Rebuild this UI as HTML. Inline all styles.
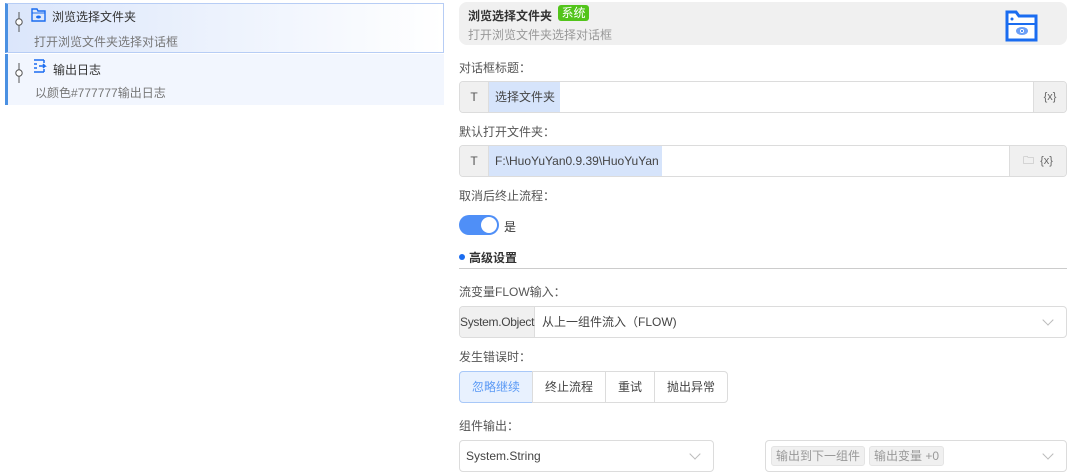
<!DOCTYPE html>
<html><head><meta charset="utf-8"><style>
*{box-sizing:border-box;margin:0;padding:0}
body{width:1070px;height:475px;background:#fff;font-family:"Liberation Sans","Noto Sans CJK SC",sans-serif;font-size:12px;color:#333;position:relative;overflow:hidden}
.a{position:absolute}
.item{position:absolute;left:5px;width:439px}
.lbl{position:absolute;left:459px;color:#555;font-size:12px}
.lbl span{font-family:"Noto Sans CJK SC",sans-serif}
.inp{position:absolute;left:459px;width:608px;height:32px;border:1px solid #dcdcdc;border-radius:4px;overflow:hidden;background:#fff}
.inp .t{position:absolute;left:0;top:0;bottom:0;width:29px;background:#f0f0f0;border-right:1px solid #ddd;text-align:center;line-height:30px;color:#555}
.inp .v{position:absolute;left:29px;top:0;bottom:0;background:#d6e4fb;line-height:30px;padding-left:6px;color:#444}
.inp .x{position:absolute;right:0;top:0;bottom:0;background:#f0f0f0;border-left:1px solid #ddd;line-height:30px;color:#666;font-size:11px;text-align:center}
.chev{position:absolute;width:8px;height:8px;border-right:1px solid #bbb;border-bottom:1px solid #bbb;transform:rotate(45deg)}
.btn{position:absolute;top:371px;height:32px;border:1px solid #dcdcdc;line-height:30px;text-align:center;color:#444;background:#fff}
.tag{display:inline-block;background:#f0f0f0;border:1px solid #e4e4e4;border-radius:3px;color:#999;padding:0 4px;height:20px;line-height:18px;margin-right:4px}
</style></head><body>
<div class="item" style="top:3px;height:50px;background:linear-gradient(90deg,#dbe6fb,#fff);border:1px solid #b7cdf5;border-left:3px solid #4a90e2"></div>
<div class="item" style="top:54px;height:51px;background:#f2f6fe;border-left:3px solid #4a90e2;left:5px"></div>
<svg class="a" style="left:14px;top:12px" width="10" height="20"><line x1="5" y1="0" x2="5" y2="20" stroke="#555"/><circle cx="5" cy="10" r="3.2" fill="#fff" stroke="#555"/></svg>
<svg class="a" style="left:14px;top:63px" width="10" height="20"><line x1="5" y1="0" x2="5" y2="20" stroke="#555"/><circle cx="5" cy="10" r="3.2" fill="#fff" stroke="#555"/></svg>
<svg class="a" style="left:31px;top:8px" width="15" height="14"><path d="M1 1h5l1 2h7v10H1z" fill="none" stroke="#1a6cf0" stroke-width="1.4"/><line x1="1" y1="5" x2="14" y2="5" stroke="#1a6cf0"/><ellipse cx="7.5" cy="9" rx="2.5" ry="1.5" fill="#1a6cf0"/></svg>
<div class="a" style="left:52px;top:8px;font-size:12px;color:#333">浏览选择文件夹</div>
<div class="a" style="left:34px;top:33px;color:#777">打开浏览文件夹选择对话框</div>
<svg class="a" style="left:32px;top:59px" width="15" height="15"><path d="M2 1h10M2 5h3M2 9h3M2 13h10M12 1v3M12 10v3M7 7h6l-2-2M13 7l-2 2" fill="none" stroke="#1a6cf0" stroke-width="1.5"/></svg>
<div class="a" style="left:53px;top:61px;color:#333">输出日志</div>
<div class="a" style="left:35px;top:84px;color:#777">以颜色#777777输出日志</div>
<div class="a" style="left:459px;top:2px;width:608px;height:43px;background:#f0f0f0;border-radius:8px"></div>
<div class="a" style="left:468px;top:7px;font-weight:bold;font-size:12px;color:#333">浏览选择文件夹</div>
<div class="a" style="left:558px;top:5px;width:31px;height:16px;background:#52c41a;border-radius:3px;color:#fff;font-size:12px;line-height:16px;text-align:center">系统</div>
<div class="a" style="left:468px;top:26px;color:#999">打开浏览文件夹选择对话框</div>
<svg class="a" style="left:1005px;top:10px" width="33" height="32"><path d="M2 2h9l3 4h17v24H2z" fill="#fff" stroke="#1a6cf0" stroke-width="3"/><line x1="2" y1="14" x2="31" y2="14" stroke="#1a6cf0" stroke-width="2"/><circle cx="7" cy="9" r="1.5" fill="#1a6cf0"/><ellipse cx="17" cy="21" rx="6" ry="4" fill="#6b9ff7"/><circle cx="17" cy="21" r="2" fill="#fff"/><circle cx="17" cy="21" r="1" fill="#1a6cf0"/></svg>
<div class="lbl" style="top:59px">对话框标题<span>：</span></div>
<div class="inp" style="top:81px"><div class="t">T</div><div class="v" style="width:71px">选择文件夹</div><div class="x" style="width:33px">{x}</div></div>
<div class="lbl" style="top:123px">默认打开文件夹<span>：</span></div>
<div class="inp" style="top:145px"><div class="t">T</div><div class="v" style="width:173px">F:\HuoYuYan0.9.39\HuoYuYan</div><div class="x" style="width:57px"><span style="color:#888">🗀</span>&nbsp; {x}</div></div>
<div class="lbl" style="top:187px">取消后终止流程<span>：</span></div>
<div class="a" style="left:459px;top:215px;width:40px;height:20px;border-radius:10px;background:#4f8ff7"></div>
<div class="a" style="left:481px;top:217px;width:16px;height:16px;border-radius:50%;background:#fff"></div>
<div class="a" style="left:504px;top:218px;color:#333">是</div>
<div class="a" style="left:459px;top:254px;width:6px;height:6px;border-radius:50%;background:#1a6cf0"></div>
<div class="a" style="left:469px;top:249px;font-weight:bold;color:#333">高级设置</div>
<div class="a" style="left:459px;top:268px;width:608px;height:1px;background:#ccc"></div>
<div class="lbl" style="top:283px">流变量FLOW输入<span>：</span></div>
<div class="inp" style="top:306px"><div class="t" style="width:75px;color:#444;letter-spacing:-0.3px">System.Object</div><div class="a" style="left:82px;top:0;line-height:30px;color:#444">从上一组件流入（FLOW)</div><div class="chev" style="right:14px;top:9px"></div></div>
<div class="lbl" style="top:348px">发生错误时<span>：</span></div>
<div class="btn" style="left:459px;width:74px;background:#e8f1fe;border-color:#a8c8f8;color:#5b9af5;border-radius:4px 0 0 4px">忽略继续</div>
<div class="btn" style="left:532px;width:74px">终止流程</div>
<div class="btn" style="left:605px;width:50px">重试</div>
<div class="btn" style="left:654px;width:74px;border-radius:0 4px 4px 0">抛出异常</div>
<div class="lbl" style="top:417px">组件输出<span>：</span></div>
<div class="inp" style="top:440px;width:255px"><div class="a" style="left:6px;top:0;line-height:30px;color:#444">System.String</div><div class="chev" style="right:14px;top:9px"></div></div>
<div class="inp" style="top:440px;left:765px;width:302px"><div class="a" style="left:5px;top:5px"><span class="tag">输出到下一组件</span><span class="tag">输出变量 +0</span></div><div class="chev" style="right:14px;top:9px"></div></div>
</body></html>
